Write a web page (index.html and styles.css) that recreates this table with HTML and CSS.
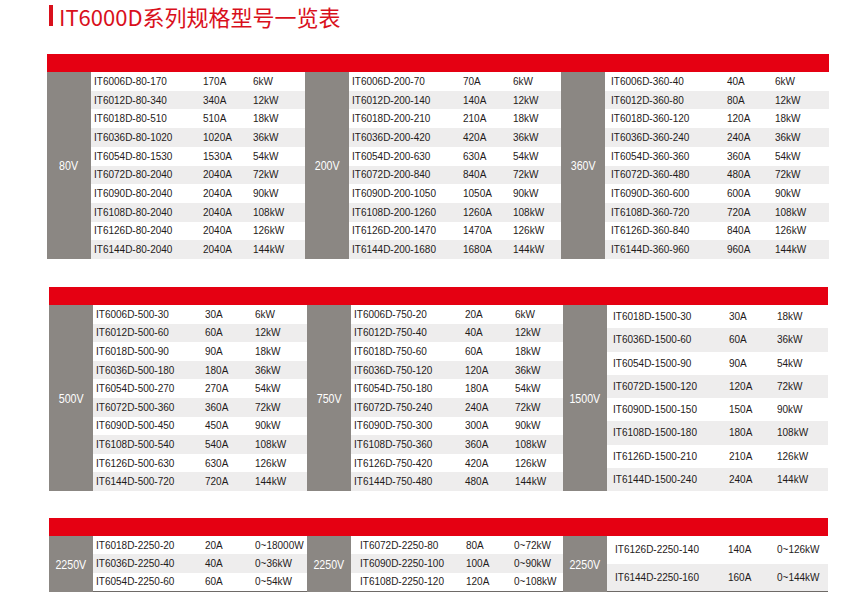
FILE: index.html
```html
<!DOCTYPE html>
<html lang="zh">
<head>
<meta charset="utf-8">
<title>IT6000D系列规格型号一览表</title>
<link rel="stylesheet" href="styles.css">
</head>
<body>
<h1 class="title"><span class="title-bar"></span>IT6000D系列规格型号一览表</h1>

<section class="sec s1">
  <div class="band"></div>
  <div class="blocks">
    <div class="block b1">
      <div class="volt"><span>80V</span></div>
      <div class="rows">
        <div class="row"><span>IT6006D-80-170</span><span>170A</span><span>6kW</span></div>
        <div class="row"><span>IT6012D-80-340</span><span>340A</span><span>12kW</span></div>
        <div class="row"><span>IT6018D-80-510</span><span>510A</span><span>18kW</span></div>
        <div class="row"><span>IT6036D-80-1020</span><span>1020A</span><span>36kW</span></div>
        <div class="row"><span>IT6054D-80-1530</span><span>1530A</span><span>54kW</span></div>
        <div class="row"><span>IT6072D-80-2040</span><span>2040A</span><span>72kW</span></div>
        <div class="row"><span>IT6090D-80-2040</span><span>2040A</span><span>90kW</span></div>
        <div class="row"><span>IT6108D-80-2040</span><span>2040A</span><span>108kW</span></div>
        <div class="row"><span>IT6126D-80-2040</span><span>2040A</span><span>126kW</span></div>
        <div class="row"><span>IT6144D-80-2040</span><span>2040A</span><span>144kW</span></div>
      </div>
    </div>
    <div class="block b2">
      <div class="volt"><span>200V</span></div>
      <div class="rows">
        <div class="row"><span>IT6006D-200-70</span><span>70A</span><span>6kW</span></div>
        <div class="row"><span>IT6012D-200-140</span><span>140A</span><span>12kW</span></div>
        <div class="row"><span>IT6018D-200-210</span><span>210A</span><span>18kW</span></div>
        <div class="row"><span>IT6036D-200-420</span><span>420A</span><span>36kW</span></div>
        <div class="row"><span>IT6054D-200-630</span><span>630A</span><span>54kW</span></div>
        <div class="row"><span>IT6072D-200-840</span><span>840A</span><span>72kW</span></div>
        <div class="row"><span>IT6090D-200-1050</span><span>1050A</span><span>90kW</span></div>
        <div class="row"><span>IT6108D-200-1260</span><span>1260A</span><span>108kW</span></div>
        <div class="row"><span>IT6126D-200-1470</span><span>1470A</span><span>126kW</span></div>
        <div class="row"><span>IT6144D-200-1680</span><span>1680A</span><span>144kW</span></div>
      </div>
    </div>
    <div class="block b3">
      <div class="volt"><span>360V</span></div>
      <div class="rows">
        <div class="row"><span>IT6006D-360-40</span><span>40A</span><span>6kW</span></div>
        <div class="row"><span>IT6012D-360-80</span><span>80A</span><span>12kW</span></div>
        <div class="row"><span>IT6018D-360-120</span><span>120A</span><span>18kW</span></div>
        <div class="row"><span>IT6036D-360-240</span><span>240A</span><span>36kW</span></div>
        <div class="row"><span>IT6054D-360-360</span><span>360A</span><span>54kW</span></div>
        <div class="row"><span>IT6072D-360-480</span><span>480A</span><span>72kW</span></div>
        <div class="row"><span>IT6090D-360-600</span><span>600A</span><span>90kW</span></div>
        <div class="row"><span>IT6108D-360-720</span><span>720A</span><span>108kW</span></div>
        <div class="row"><span>IT6126D-360-840</span><span>840A</span><span>126kW</span></div>
        <div class="row"><span>IT6144D-360-960</span><span>960A</span><span>144kW</span></div>
      </div>
    </div>
  </div>
</section>

<section class="sec s2">
  <div class="band"></div>
  <div class="blocks">
    <div class="block b1">
      <div class="volt"><span>500V</span></div>
      <div class="rows">
        <div class="row"><span>IT6006D-500-30</span><span>30A</span><span>6kW</span></div>
        <div class="row"><span>IT6012D-500-60</span><span>60A</span><span>12kW</span></div>
        <div class="row"><span>IT6018D-500-90</span><span>90A</span><span>18kW</span></div>
        <div class="row"><span>IT6036D-500-180</span><span>180A</span><span>36kW</span></div>
        <div class="row"><span>IT6054D-500-270</span><span>270A</span><span>54kW</span></div>
        <div class="row"><span>IT6072D-500-360</span><span>360A</span><span>72kW</span></div>
        <div class="row"><span>IT6090D-500-450</span><span>450A</span><span>90kW</span></div>
        <div class="row"><span>IT6108D-500-540</span><span>540A</span><span>108kW</span></div>
        <div class="row"><span>IT6126D-500-630</span><span>630A</span><span>126kW</span></div>
        <div class="row"><span>IT6144D-500-720</span><span>720A</span><span>144kW</span></div>
      </div>
    </div>
    <div class="block b2">
      <div class="volt"><span>750V</span></div>
      <div class="rows">
        <div class="row"><span>IT6006D-750-20</span><span>20A</span><span>6kW</span></div>
        <div class="row"><span>IT6012D-750-40</span><span>40A</span><span>12kW</span></div>
        <div class="row"><span>IT6018D-750-60</span><span>60A</span><span>18kW</span></div>
        <div class="row"><span>IT6036D-750-120</span><span>120A</span><span>36kW</span></div>
        <div class="row"><span>IT6054D-750-180</span><span>180A</span><span>54kW</span></div>
        <div class="row"><span>IT6072D-750-240</span><span>240A</span><span>72kW</span></div>
        <div class="row"><span>IT6090D-750-300</span><span>300A</span><span>90kW</span></div>
        <div class="row"><span>IT6108D-750-360</span><span>360A</span><span>108kW</span></div>
        <div class="row"><span>IT6126D-750-420</span><span>420A</span><span>126kW</span></div>
        <div class="row"><span>IT6144D-750-480</span><span>480A</span><span>144kW</span></div>
      </div>
    </div>
    <div class="block b3">
      <div class="volt"><span>1500V</span></div>
      <div class="rows">
        <div class="row"><span>IT6018D-1500-30</span><span>30A</span><span>18kW</span></div>
        <div class="row"><span>IT6036D-1500-60</span><span>60A</span><span>36kW</span></div>
        <div class="row"><span>IT6054D-1500-90</span><span>90A</span><span>54kW</span></div>
        <div class="row"><span>IT6072D-1500-120</span><span>120A</span><span>72kW</span></div>
        <div class="row"><span>IT6090D-1500-150</span><span>150A</span><span>90kW</span></div>
        <div class="row"><span>IT6108D-1500-180</span><span>180A</span><span>108kW</span></div>
        <div class="row"><span>IT6126D-1500-210</span><span>210A</span><span>126kW</span></div>
        <div class="row"><span>IT6144D-1500-240</span><span>240A</span><span>144kW</span></div>
      </div>
    </div>
  </div>
</section>

<section class="sec s3">
  <div class="band"></div>
  <div class="blocks">
    <div class="block b1">
      <div class="volt"><span>2250V</span></div>
      <div class="rows">
        <div class="row"><span>IT6018D-2250-20</span><span>20A</span><span>0~18000W</span></div>
        <div class="row"><span>IT6036D-2250-40</span><span>40A</span><span>0~36kW</span></div>
        <div class="row"><span>IT6054D-2250-60</span><span>60A</span><span>0~54kW</span></div>
      </div>
    </div>
    <div class="block b2">
      <div class="volt"><span>2250V</span></div>
      <div class="rows">
        <div class="row"><span>IT6072D-2250-80</span><span>80A</span><span>0~72kW</span></div>
        <div class="row"><span>IT6090D-2250-100</span><span>100A</span><span>0~90kW</span></div>
        <div class="row"><span>IT6108D-2250-120</span><span>120A</span><span>0~108kW</span></div>
      </div>
    </div>
    <div class="block b3">
      <div class="volt"><span>2250V</span></div>
      <div class="rows">
        <div class="row"><span>IT6126D-2250-140</span><span>140A</span><span>0~126kW</span></div>
        <div class="row"><span>IT6144D-2250-160</span><span>160A</span><span>0~144kW</span></div>
      </div>
    </div>
  </div>
</section>
</body>
</html>
```
FILE: styles.css
```css
* { box-sizing: border-box; }
html, body { margin: 0; padding: 0; background: #ffffff; }
body {
  width: 867px;
  height: 598px;
  overflow: hidden;
  font-family: "Liberation Sans", Arial, sans-serif;
  color: #1f1b1a;
}

.title {
  margin: 0;
  padding: 3px 0 0 49px;
  height: 54px;
  display: flex;
  align-items: flex-start;
  font-family: "Noto Sans CJK SC", "Noto Sans", sans-serif;
  font-weight: 400;
  font-size: 22px;
  line-height: 26px;
  color: #d9101c;
}
.title-bar {
  width: 4px;
  height: 21px;
  margin-top: 2px;
  margin-right: 6px;
  background: #d9101c;
}

.sec { width: 782px; margin-left: 47px; }
.s2, .s3 { width: 779px; margin-left: 49px; }
.s2 { margin-top: 28px; }
.s3 { margin-top: 27px; }

.band { height: 18px; background: #e50012; }

.blocks {
  display: grid;
  grid-template-columns: 258px 256px 1fr;
}
.s1 .blocks { height: 187px; }
.s2 .blocks { height: 186px; }
.s3 .blocks { height: 56px; }

.block { display: flex; min-width: 0; }

.volt {
  width: 44px;
  flex: none;
  background: #8b8783;
  color: #ffffff;
  display: flex;
  align-items: center;
  justify-content: center;
  font-size: 13px;
}
.volt span {
  display: inline-block;
  transform: scaleX(0.82);
}

.rows {
  flex: 1;
  display: grid;
  grid-auto-rows: 1fr;
}
.s3 .rows { border-bottom: 1px solid #6e6a67; }

.row {
  display: grid;
  align-items: center;
  font-size: 10px;
  white-space: nowrap;
}
.row:nth-child(even) { background: #eeeded; }

.b1 .row { grid-template-columns: 109px 50px 1fr; padding-left: 3px; }
.b2 .row { grid-template-columns: 111px 50px 1fr; padding-left: 3px; }
.b3 .row { grid-template-columns: 116px 48px 1fr; padding-left: 6px; }

.s3 .b2 .row { grid-template-columns: 106px 48px 1fr; padding-left: 9px; }
.s3 .b3 .row { grid-template-columns: 113px 49px 1fr; padding-left: 8px; }
```
